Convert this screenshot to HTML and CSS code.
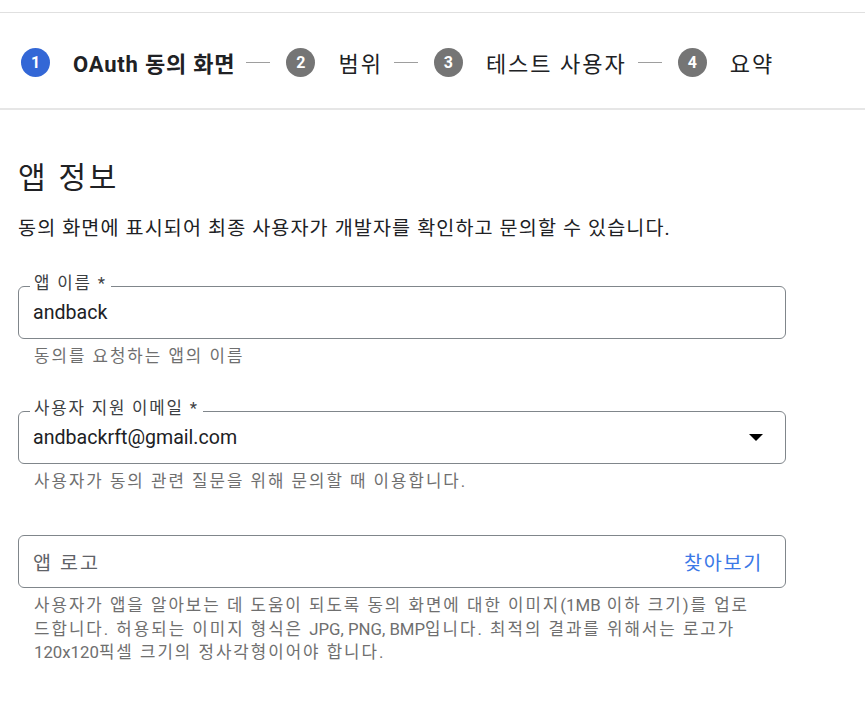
FILE: index.html
```html
<!DOCTYPE html>
<html lang="ko">
<head>
<meta charset="utf-8">
<link rel="stylesheet" href="styles.css">
</head>
<body>
<div class="topbar"></div>
<nav class="stepper">
  <div class="step active"><span class="num">1</span><span class="label">OAuth 동의 화면</span></div>
  <span class="sep"></span>
  <div class="step"><span class="num">2</span><span class="label">범위</span></div>
  <span class="sep"></span>
  <div class="step"><span class="num">3</span><span class="label">테스트 사용자</span></div>
  <span class="sep"></span>
  <div class="step"><span class="num">4</span><span class="label">요약</span></div>
</nav>
<main class="content">
  <h1 class="title">앱 정보</h1>
  <p class="desc">동의 화면에 표시되어 최종 사용자가 개발자를 확인하고 문의할 수 있습니다.</p>

  <div class="field-block">
    <div class="field">
      <span class="field-label">앱 이름 *</span>
      <span class="value">andback</span>
    </div>
    <div class="hint">동의를 요청하는 앱의 이름</div>
  </div>

  <div class="field-block">
    <div class="field">
      <span class="field-label">사용자 지원 이메일 *</span>
      <span class="value">andbackrft@gmail.com</span>
      <svg class="arrow" width="14" height="7" viewBox="0 0 14 7"><polygon points="0,0 14,0 7,7" fill="#000"/></svg>
    </div>
    <div class="hint">사용자가 동의 관련 질문을 위해 문의할 때 이용합니다.</div>
  </div>

  <div class="field-block">
    <div class="field">
      <span class="value placeholder">앱 로고</span>
      <span class="browse">찾아보기</span>
    </div>
    <div class="hint">사용자가 앱을 알아보는 데 도움이 되도록 동의 화면에 대한 이미지<span class="lat">(1MB</span> 이하 크기)를 업로<br>드합니다. 허용되는 이미지 형식은 <span class="lat">JPG, PNG, BMP</span>입니다. 최적의 결과를 위해서는 로고가<br><span class="lat">120x120</span>픽셀 크기의 정사각형이어야 합니다.</div>
  </div>
</main>
</body>
</html>
```

FILE: styles.css
```css
* { box-sizing: border-box; }
html, body { margin: 0; padding: 0; background: #fff; }
body {
  font-family: Roboto, "Noto Sans CJK KR", sans-serif;
  color: #202124;
  width: 865px;
}
.topbar {
  height: 13px;
  border-bottom: 1px solid #e0e0e0;
}
.stepper {
  display: flex;
  align-items: center;
  height: 97px;
  padding: 3px 0 0 21px;
  border-bottom: 2px solid #e6e6e6;
}
.step {
  display: flex;
  align-items: center;
}
.num {
  width: 29px;
  height: 29px;
  border-radius: 50%;
  background: #757575;
  color: #fff;
  font-size: 16px;
  font-weight: 700;
  display: flex;
  align-items: center;
  justify-content: center;
  margin-right: 23px;
}
.step.active .num { background: #3367d6; }
.label {
  font-size: 22px;
  letter-spacing: 2px;
  color: #202124;
}
.step.active .label { font-weight: 700; letter-spacing: 0.8px; }
.sep {
  width: 24px;
  height: 1px;
  background: #9e9e9e;
  margin: 0 16px 0 11px;
}
.content {
  padding: 0 79px 0 18px;
}
.title {
  font-size: 30px;
  font-weight: 400;
  letter-spacing: 2.7px;
  line-height: 40px;
  margin: 48px 0 0 0;
  color: #202124;
}
.desc {
  font-size: 19.6px;
  letter-spacing: 1.1px;
  line-height: 28px;
  margin: 17px 0 0 0;
  color: #202124;
}
.field-block {
  margin-top: 43px;
}
.field-block + .field-block {
  margin-top: 42px;
}
.field {
  position: relative;
  height: 53px;
  border: 1px solid #80868b;
  border-radius: 6px;
  display: flex;
  align-items: center;
  padding: 0 22px 0 14px;
}
.field-label {
  position: absolute;
  left: 11px;
  top: -16px;
  padding: 0 4px;
  background: #fff;
  font-size: 16.8px;
  letter-spacing: 1.8px;
  line-height: 24px;
  color: #3c4043;
}
.value {
  font-size: 19.6px;
  color: #202124;
  flex: 1;
}
.placeholder { color: #5f6368; letter-spacing: 2px; }
.browse {
  font-size: 19.6px;
  letter-spacing: 1.7px;
  color: #3b78e7;
}
.arrow { display: block; }
.hint {
  margin-top: 6px;
  padding-left: 16px;
  font-size: 16.8px;
  letter-spacing: 2px;
  line-height: 23.5px;
  color: #6f6f6f;
  white-space: nowrap;
}
.lat { letter-spacing: 0; }
```
